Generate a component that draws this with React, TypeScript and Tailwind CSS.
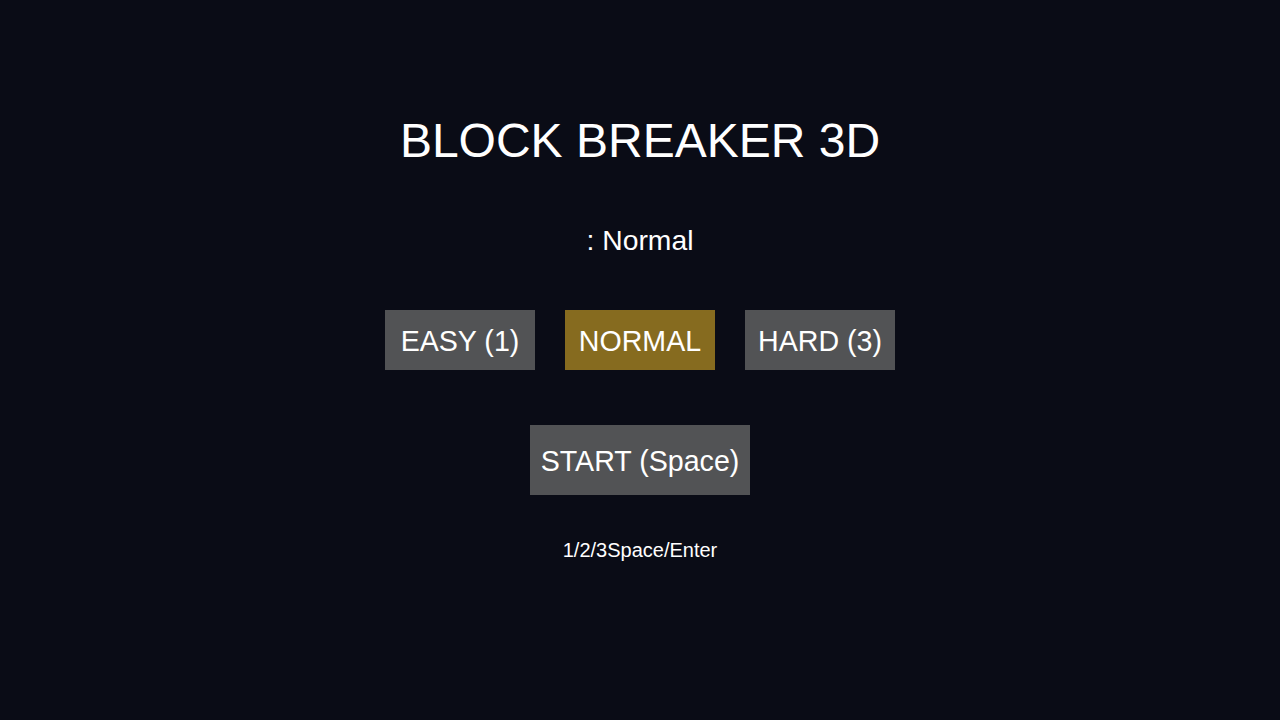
import React from 'react';

const levels = [
  { label: 'EASY (1)', active: false },
  { label: 'NORMAL', active: true },
  { label: 'HARD (3)', active: false },
];

export default function App() {
  return (
    <div
      className="w-full h-[720px] bg-[#0a0c16] text-white flex flex-col items-center"
      style={{ fontFamily: '"Liberation Sans", Arial, sans-serif' }}
    >
      <h1 className="mt-[117px] text-[48px] leading-none font-normal">BLOCK BREAKER 3D</h1>

      <p className="mt-[61px] text-[28.3px] leading-none">: Normal</p>

      <div className="mt-[56px] flex gap-[30px]">
        {levels.map((l) => (
          <button
            key={l.label}
            className={`w-[150px] h-[60px] flex items-center justify-center pt-[1px] text-[28.6px] leading-none text-white ${
              l.active ? 'bg-[#866b1f]' : 'bg-[#525355]'
            }`}
          >
            {l.label}
          </button>
        ))}
      </div>

      <button className="mt-[55px] w-[220px] h-[70px] flex items-center justify-center pt-[1px] bg-[#525355] text-[28.6px] leading-none text-white">
        START (Space)
      </button>

      <p className="mt-[45px] text-[20px] leading-none">1/2/3Space/Enter</p>
    </div>
  );
}
